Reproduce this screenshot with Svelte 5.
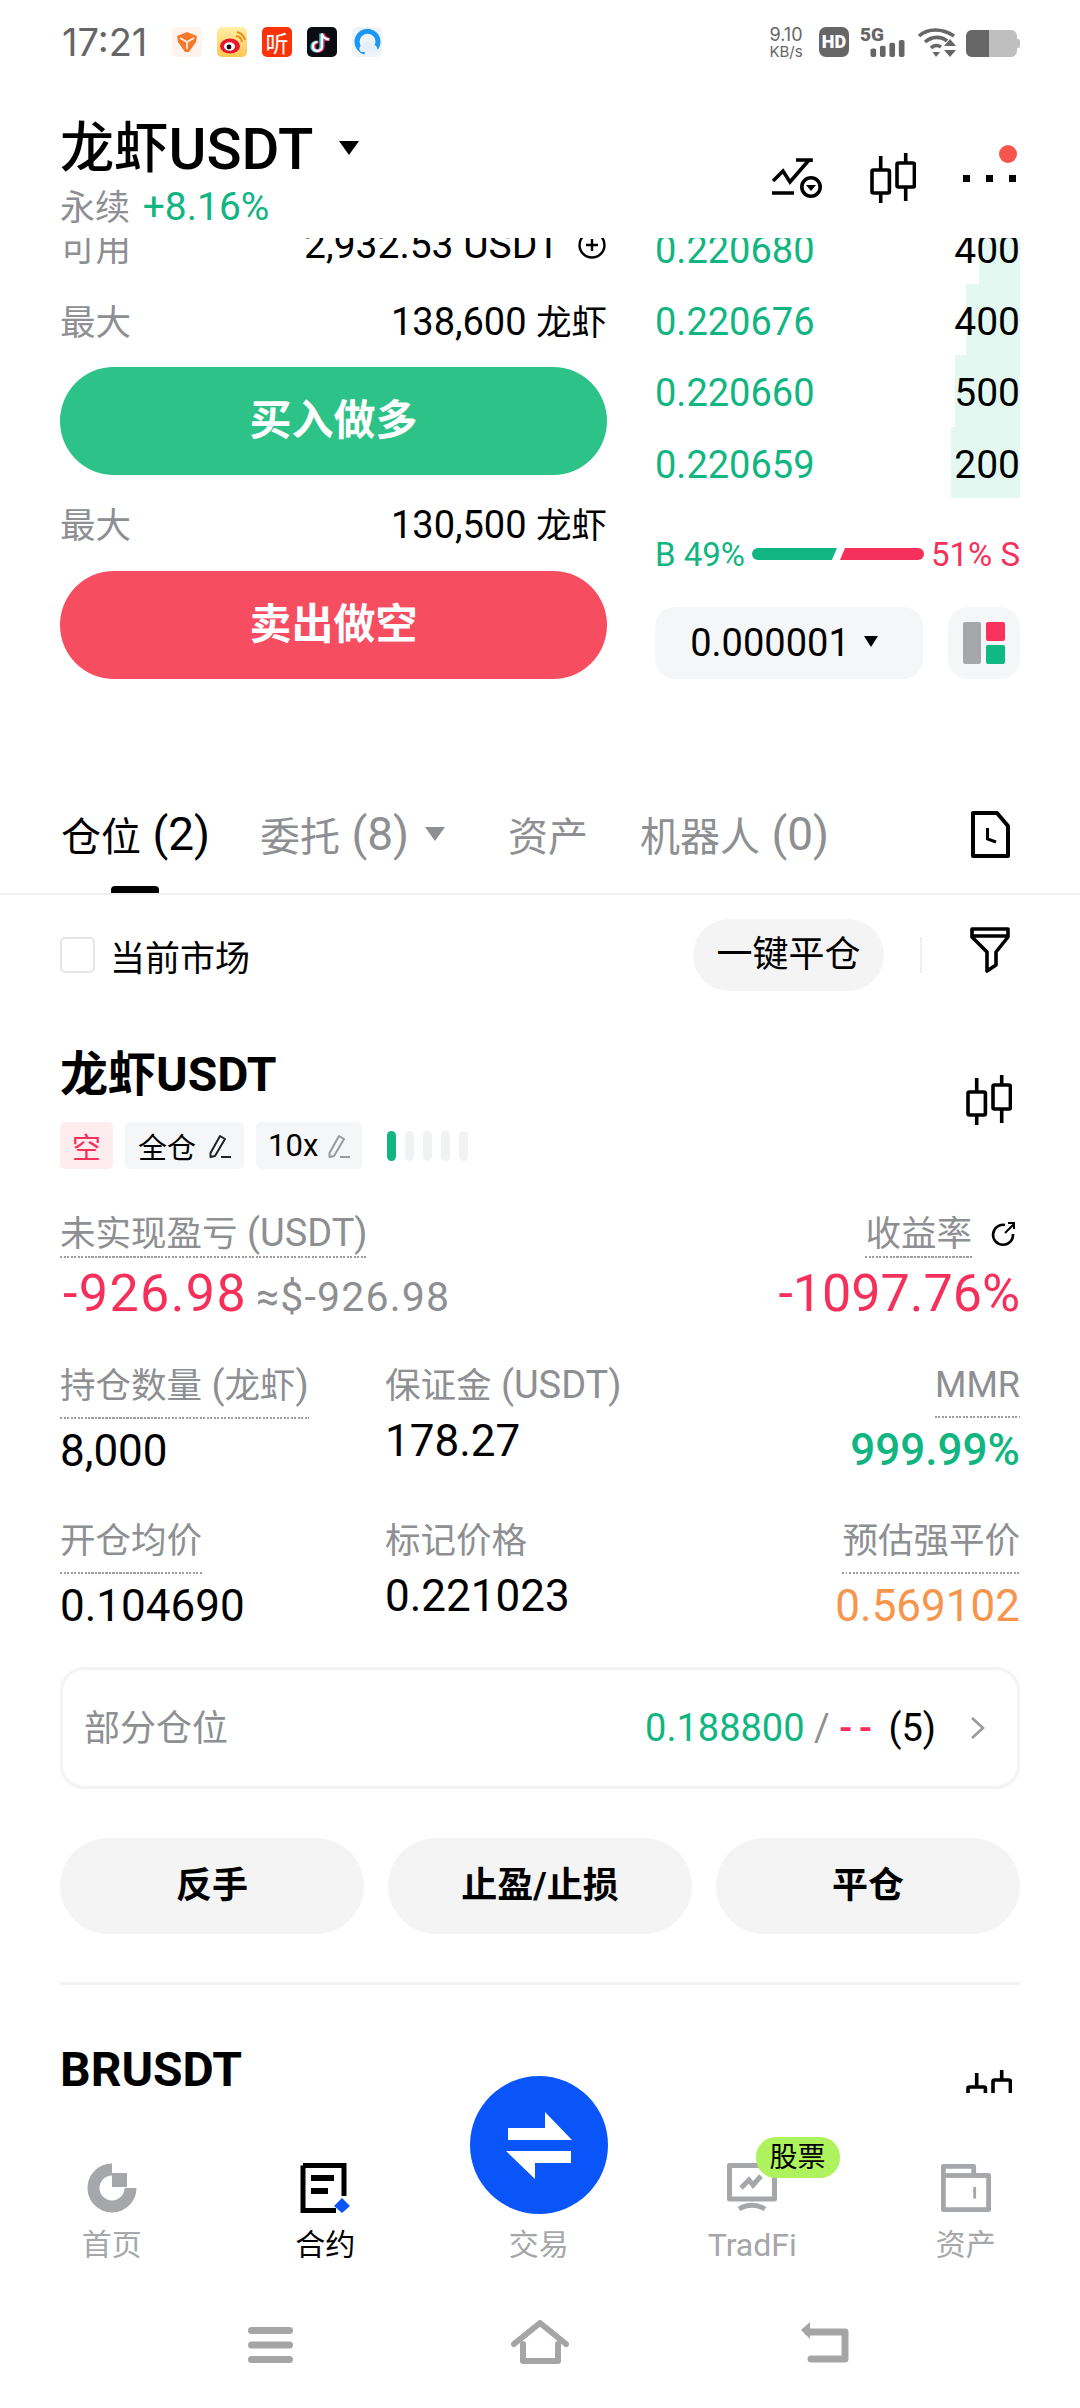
<script>
    // order book rows, bar = depth width in px
    const asks = [
        { price: "0.220680", qty: "400", bar: 41 },
        { price: "0.220676", qty: "400", bar: 54 },
        { price: "0.220660", qty: "500", bar: 65 },
        { price: "0.220659", qty: "200", bar: 69 },
    ];
    const apps = ["y", "weibo", "ting", "tiktok", "q"];
    const actions = ["反手", "止盈/止损", "平仓"];
</script>

{#snippet candle()}
    <svg class="candle" viewBox="0 0 46 50" fill="none" stroke="#000" stroke-width="3.6">
        <path d="M10.7 3V17M10.7 40V50M35.7 0V10M35.7 34V48" />
        <rect x="2" y="17" width="17.4" height="23" rx="1.5" />
        <rect x="27" y="10" width="17.4" height="24" rx="1.5" />
    </svg>
{/snippet}

{#snippet pencil(color)}
    <svg class="pencil" viewBox="0 0 22 26" fill="none" stroke={color} stroke-width="2">
        <path d="M1.500 20L11 3L16 6L6 23L1.500 24Z" stroke-linejoin="round" />
        <path d="M12 24H22" />
    </svg>
{/snippet}

<div class="screen">
    <div class="status">
        <span class="time">17:21</span>
        <div class="apps">
            {#each apps as app}
                <div class="app {app}">
                    {#if app === "y"}
                        <svg viewBox="0 0 30 30"><path d="M5 9L15 5L25 9L24 15L17 25H13L6 15Z" fill="#f47a2b" /><path d="M8 11L15 15L22 11M15 15V22" stroke="#fff3ec" stroke-width="1.6" fill="none" /></svg>
                    {:else if app === "weibo"}
                        <svg viewBox="0 0 30 30">
                            <ellipse cx="13" cy="19" rx="10" ry="7.5" fill="#e6162d" />
                            <ellipse cx="12.5" cy="19.5" rx="5.5" ry="4.2" fill="#fff" />
                            <circle cx="12" cy="20" r="2.4" fill="#111" />
                            <path d="M19 9A7 7 0 0 1 25 15M20 5A11 11 0 0 1 28 13" stroke="#f08a1d" stroke-width="2" fill="none" />
                        </svg>
                    {:else if app === "ting"}
                        <span>听</span>
                    {:else if app === "tiktok"}
                        <svg viewBox="0 0 30 30" fill="none" stroke-width="3.4">
                            <path d="M15 6V19A4.5 4.5 0 1 1 10.500 14.500M15 6C15.500 9.500 18 11.500 22 12" stroke="#25d8e0" transform="translate(-1 .6)" />
                            <path d="M15 6V19A4.500 4.500 0 1 1 10.500 14.500M15 6C15.500 9.500 18 11.500 22 12" stroke="#f42a52" transform="translate(1 .6)" />
                            <path d="M15 6V19A4.500 4.500 0 1 1 10.500 14.500M15 6C15.500 9.500 18 11.500 22 12" stroke="#fff" stroke-width="2.4" transform="translate(0 .4)" />
                        </svg>
                    {:else}
                        <svg viewBox="0 0 30 30">
                            <path d="M24 21A10.500 10.500 0 1 0 13 25" stroke="#1c97f5" stroke-width="5" fill="none" />
                            <path d="M9 25A4 4 0 0 1 10 18A6 6 0 0 1 21 18A4 4 0 0 1 24 25Z" fill="#e4eff8" />
                        </svg>
                    {/if}
                </div>
            {/each}
        </div>
        <div class="sys">
            <div class="speed"><span>9.10</span><span class="unit">KB/s</span></div>
            <div class="hd">HD</div>
            <div class="net">
                <span class="g">5G</span>
                <svg viewBox="0 0 36 18" fill="#666"><rect x="0" y="9" width="6" height="9" rx="2" /><rect x="10" y="6" width="6" height="12" rx="2" /><rect x="20" y="3" width="6" height="15" rx="2" /><rect x="30" y="0" width="6" height="18" rx="2" /></svg>
            </div>
            <svg class="wifi" viewBox="0 0 39 30" fill="none" stroke="#666" stroke-width="3.6">
                <path d="M2 9C11 1 25 1 37 9M8 15C15 9 24 9 30 14M14 21C17 18 21 18 24 20" />
                <path d="M15.500 25H23L19 30Z" fill="#666" stroke="none" />
                <path d="M27 19H39L33 12ZM27 23H39L33 30Z" fill="#666" stroke="none" />
            </svg>
            <div class="battery"><div class="level"></div></div>
        </div>
    </div>

    <div class="head">
        <div>
            <div class="pair"><span class="zh">龙虾</span>USDT<i class="caret big"></i></div>
            <div class="sub"><span class="gray zh">永续</span> <span class="green">+8.16%</span></div>
        </div>
        <div class="head-icons">
            <svg class="chart" viewBox="0 0 50 40" fill="none" stroke="#000" stroke-width="3.6">
                <path d="M1 23L11 13L18 24L37 2M24 2H39V4M0 35H22" />
                <circle cx="39" cy="29" r="9.200" />
                <path d="M34 27H44L39 33Z" fill="#000" stroke="none" />
            </svg>
            {@render candle()}
            <div class="more">
                <i></i><i></i><i></i>
                <b></b>
            </div>
        </div>
    </div>

    <div class="scroll">
        <div class="trade">
            <div class="order-form">
                <div class="form-row avail">
                    <span class="gray zh">可用</span>
                    <span class="amount">2,932.53 USDT
                        <svg class="plus" viewBox="0 0 30 30" fill="none" stroke="#000" stroke-width="2.400"><circle cx="15" cy="15" r="12.500" /><path d="M15 9V21M9 15H21" /></svg>
                    </span>
                </div>
                <div class="form-row first-max">
                    <span class="gray zh">最大</span>
                    <span>138,600 <span class="zh">龙虾</span></span>
                </div>
                <div class="trade-btn buy first-btn">买入做多</div>
                <div class="form-row second-max">
                    <span class="gray zh">最大</span>
                    <span>130,500 <span class="zh">龙虾</span></span>
                </div>
                <div class="trade-btn sell">卖出做空</div>
            </div>

            <div class="book">
                {#each asks as ask}
                    <div class="book-row">
                        <i class="depth" style="width: {ask.bar}px"></i>
                        <span class="green">{ask.price}</span>
                        <span class="qty">{ask.qty}</span>
                    </div>
                {/each}
                <div class="ratio">
                    <span class="green">B 49%</span>
                    <div class="ratio-bar">
                        <i class="b"></i>
                        <i class="s"></i>
                    </div>
                    <span class="red">51% S</span>
                </div>
                <div class="book-tools">
                    <div class="step">0.000001<i class="caret small"></i></div>
                    <div class="layout-btn">
                        <svg viewBox="0 0 42 42"><rect x="0" y="0" width="18" height="42" rx="2" fill="#a5a7aa" /><rect x="23" y="0" width="19" height="19" rx="2" fill="#f5335b" /><rect x="23" y="23" width="19" height="19" rx="2" fill="#10b981" /></svg>
                    </div>
                </div>
            </div>
        </div>

        <div class="tabs">
            <span class="tab active"><span class="zh40">仓位</span> (2)<i class="ink"></i></span>
            <span class="tab t2"><span class="zh40">委托</span> (8)<i class="caret gray-caret"></i></span>
            <span class="tab t3"><span class="zh40">资产</span></span>
            <span class="tab t4"><span class="zh40">机器人</span> (0)</span>
            <svg class="file" viewBox="0 0 39 47" fill="none" stroke="#000" stroke-width="4">
                <path d="M2 2H26L37 15V45H2Z" stroke-linejoin="round" />
                <path d="M16.500 17V28L25 31" stroke-width="3" />
            </svg>
        </div>

        <div class="toolbar">
            <i class="check"></i>
            <span class="market">当前市场</span>
            <span class="close-all">一键平仓</span>
            <i class="vline"></i>
            <svg class="filter" viewBox="0 0 40 46" fill="none" stroke="#000" stroke-width="3.600" stroke-linejoin="round">
                <path d="M2 2H38V10L26 25V38L17 44V25L2 10Z" />
                <path d="M2 9H38" />
            </svg>
        </div>

        <div class="position">
            <div class="pos-head">
                <div>
                    <div class="pos-name">龙虾USDT</div>
                    <div class="tags">
                        <span class="tag short">空</span>
                        <span class="tag">全仓{@render pencil("#222")}</span>
                        <span class="tag latin">10x{@render pencil("#999")}</span>
                        <div class="lever">
                            <i class="on"></i><i></i><i></i><i></i><i></i>
                        </div>
                    </div>
                </div>
                {@render candle()}
            </div>

            <div class="pnl">
                <div class="cell">
                    <span class="label"><span class="zh">未实现盈亏</span> (USDT)</span>
                    <div class="pnl-val"><span class="red big-num wide">-926.98</span> <span class="usd">≈$-926.98</span></div>
                </div>
                <div class="cell right">
                    <div class="roe-label">
                        <span class="label"><span class="zh">收益率</span></span>
                        <svg class="share" viewBox="0 0 26 26" fill="none" stroke="#000" stroke-width="2.600">
                            <path d="M15 4A10 10 0 1 0 23 13" />
                            <path d="M15 12L24 3M18 2H24V8" stroke-width="2" />
                        </svg>
                    </div>
                    <div class="pnl-val"><span class="red big-num">-1097.76%</span></div>
                </div>
            </div>

            <div class="grid">
                <div class="cell"><span class="label tall"><span class="zh">持仓数量</span> (<span class="zh">龙虾</span>)</span><div class="val">8,000</div></div>
                <div class="cell"><span class="label plain"><span class="zh">保证金</span> (USDT)</span><div class="val mid">178.27</div></div>
                <div class="cell right"><span class="label tall mmr">MMR</span><div class="val green strong">999.99%</div></div>

                <div class="cell"><span class="label tall"><span class="zh">开仓均价</span></span><div class="val">0.104690</div></div>
                <div class="cell"><span class="label plain"><span class="zh">标记价格</span></span><div class="val mid">0.221023</div></div>
                <div class="cell right"><span class="label tall"><span class="zh">预估强平价</span></span><div class="val orange">0.569102</div></div>
            </div>

            <div class="partial">
                <span class="gray part-name">部分仓位</span>
                <span class="partial-val">
                    <span class="green">0.188800</span>
                    <span class="gray">/</span>
                    <span class="red dashes">--</span>
                    (5)
                </span>
                <svg class="chev" viewBox="0 0 15 24" fill="none" stroke="#999" stroke-width="2.600"><path d="M2 2L13 12L2 22" /></svg>
            </div>

            <div class="actions">
                {#each actions as action}
                    <div class="action">{action}</div>
                {/each}
            </div>
        </div>

        <div class="next">
            <div class="pos-name">BRUSDT</div>
            {@render candle()}
        </div>
    </div>

    <nav class="nav">
        <div class="nav-item">
            <svg viewBox="0 0 50 50" fill="none">
                <path d="M25 6.500A18.500 18.500 0 1 0 43.500 25" stroke="#a5a7aa" stroke-width="12" />
                <rect x="25" y="10" width="15" height="14" fill="#a5a7aa" />
            </svg>
            <span>首页</span>
        </div>
        <div class="nav-item current">
            <svg viewBox="0 0 50 50">
                <path d="M3 2.500H44V33M36 47.500H3V2.500" fill="none" stroke="#000" stroke-width="5" />
                <rect x="11" y="12" width="23" height="6" fill="#000" />
                <rect x="11" y="25" width="17" height="6" fill="#000" />
                <path d="M42 35L50 43L42 50L34 43Z" fill="#0a55fa" />
            </svg>
            <span>合约</span>
        </div>
        <div class="nav-item trade-item">
            <div class="fab">
                <svg viewBox="0 0 138 138" fill="#fff">
                    <path d="M38 52H75V36L102 64H38Z" />
                    <path d="M101 75V87H65V103L36 75Z" />
                </svg>
            </div>
            <i class="nav-gap"></i>
            <span>交易</span>
        </div>
        <div class="nav-item">
            <svg viewBox="0 0 50 50" fill="none" stroke="#a5a7aa" stroke-width="5">
                <path d="M2.500 2.500H47.500V36H2.500Z" stroke-linejoin="round" />
                <path d="M12 46C20 41 30 41 38 46" />
                <path d="M14 25L22 17L26 22L34 13" stroke-width="5" />
            </svg>
            <em class="badge">股票</em>
            <span class="tradfi">TradFi</span>
        </div>
        <div class="nav-item">
            <svg viewBox="0 0 52 50" fill="none" stroke="#a5a7aa" stroke-width="5">
                <path d="M2.500 47.500V2.500H34V12H49.500V47.500Z" stroke-linejoin="round" />
                <path d="M2.500 12H34" />
                <path d="M35 24V36" stroke-width="3" />
            </svg>
            <span>资产</span>
        </div>
    </nav>

    <div class="home-bar">
        <svg class="h-menu" viewBox="0 0 45 36" fill="none" stroke="#a5a5a5" stroke-width="7" stroke-linecap="round"><path d="M3.500 3.500H41.500M3.500 18H41.500M3.500 32.500H41.500" /></svg>
        <svg class="h-home" viewBox="0 0 58 44" fill="none" stroke="#a5a5a5" stroke-width="6" stroke-linecap="round" stroke-linejoin="round"><path d="M3 24L29 3L55 24" /><path d="M12 24V41H47V24" /></svg>
        <svg class="h-back" viewBox="0 0 48 42" fill="none" stroke="#a5a5a5" stroke-width="7" stroke-linejoin="round"><path d="M7 11H44V38H10" stroke-linecap="round" /><path d="M9 1V18L0 9Z" fill="#a5a5a5" stroke="none" /></svg>
    </div>
</div>

<style>
    :global(body) {
        margin: 0;
        background: #fff;
    }

    .screen {
        width: 1080px;
        height: 2408px;
        display: flex;
        flex-direction: column;
        overflow: hidden;
        position: relative;
        background: #fff;
        color: #000;
        font-family: Roboto, "Noto Sans CJK SC", sans-serif;
        font-size: 36px;
    }

    i, em {
        display: block;
        font-style: normal;
    }

    /* latin runs sit about 7% bigger than the han next to them */
    .zh { font-size: 0.935em; }
    .zh40 { font-size: 40px; }

    .green { color: #10b582; }
    .red { color: #f5315b; }
    .orange { color: #f6964c; }
    .gray { color: #8d8f92; }

    /* status bar */
    .status {
        height: 84px;
        flex: none;
        display: flex;
        align-items: flex-start;
        padding: 27px 63px 0 62px;
        box-sizing: border-box;
    }

    .time {
        font-family: Inter, sans-serif;
        font-size: 38px;
        line-height: 30px;
        color: #666;
        width: 110px;
    }

    .apps {
        display: flex;
        gap: 15px;
    }

    .app {
        width: 30px;
        height: 30px;
        border-radius: 5px;
        overflow: hidden;
        display: flex;
        align-items: center;
        justify-content: center;
    }

    .app svg {
        width: 30px;
        height: 30px;
    }

    .app.y { background: #fff4ed; }
    .app.weibo { background: linear-gradient(#fff0a8, #fdc64f); }
    .app.ting {
        background: #fa3308;
        color: #fff;
        font-size: 23px;
    }
    .app.tiktok { background: #0b0b14; }
    .app.q { background: #eff4fa; }

    .sys {
        margin-left: auto;
        display: flex;
        align-items: flex-start;
        color: #666;
    }

    .speed {
        display: flex;
        flex-direction: column;
        align-items: center;
        font-family: Inter, sans-serif;
        font-size: 18px;
        line-height: 15px;
        width: 36px;
        margin-right: 15px;
    }

    .unit {
        font-size: 15px;
        margin-top: 2px;
    }

    .hd {
        width: 30px;
        height: 30px;
        background: #666;
        color: #fff;
        border-radius: 7px;
        font-size: 18px;
        font-weight: 900;
        line-height: 30px;
        text-align: center;
        margin-right: 11px;
    }

    .net {
        width: 45px;
        height: 30px;
        position: relative;
        margin-right: 12px;
    }

    .g {
        position: absolute;
        left: 0;
        top: -2px;
        font-size: 19px;
        line-height: 20px;
        font-weight: 900;
    }

    .net svg {
        position: absolute;
        right: 0;
        bottom: 0;
        width: 35px;
        height: 17px;
    }

    .wifi {
        width: 39px;
        height: 30px;
        margin-right: 10px;
    }

    .battery {
        width: 51px;
        height: 27px;
        margin-top: 3px;
        background: #bfbfbf;
        border-radius: 6px;
        position: relative;
    }

    .battery::after {
        content: "";
        position: absolute;
        right: -3px;
        top: 9px;
        width: 3px;
        height: 9px;
        background: #bfbfbf;
        border-radius: 0 2px 2px 0;
    }

    .level {
        width: 23px;
        height: 27px;
        background: #666;
        border-radius: 6px 0 0 6px;
    }

    /* instrument header */
    .head {
        height: 154px;
        flex: none;
        display: flex;
        justify-content: space-between;
        padding: 0 60px;
        box-sizing: border-box;
        background: #fff;
    }

    .pair {
        display: flex;
        align-items: center;
        font-size: 58px;
        font-weight: 500;
        line-height: 70px;
        margin-top: 30px;
        white-space: pre;
    }

    .caret {
        width: 0;
        height: 0;
        border-style: solid;
        border-color: #000 transparent transparent;
    }

    .caret.big {
        border-width: 14px 10px 0;
        margin: -2px 0 0 26px;
    }

    .sub {
        font-size: 39px;
        line-height: 44px;
        margin-top: 1px;
        white-space: pre;
    }

    .sub .zh {
        font-size: 35px;
        margin-right: 3px;
    }

    .head-icons {
        display: flex;
        align-items: flex-start;
    }

    .chart {
        width: 50px;
        height: 40px;
        margin: 74px 48px 0 0;
    }

    .head-icons .candle {
        margin: 69px 47px 0 0;
    }

    .candle {
        width: 46px;
        height: 50px;
        flex: none;
    }

    .more {
        display: flex;
        gap: 16px;
        width: 53px;
        margin: 91px 4px 0 0;
        position: relative;
    }

    .more i {
        width: 7px;
        height: 7px;
        background: #000;
    }

    .more b {
        position: absolute;
        right: -1px;
        top: -30px;
        width: 18px;
        height: 18px;
        border-radius: 50%;
        background: #f6564e;
    }

    /* scrolled content */
    .scroll {
        flex: none;
        height: 1855px;
        overflow: hidden;
    }

    .trade {
        display: flex;
        justify-content: space-between;
        padding: 0 60px;
        margin-top: -26px;
    }

    .order-form {
        width: 547px;
    }

    .form-row {
        display: flex;
        justify-content: space-between;
        align-items: center;
        height: 50px;
        font-size: 38px;
    }

    .avail {
        margin-top: 8px;
    }

    .amount {
        display: flex;
        align-items: center;
        font-size: 39px;
    }

    .plus {
        width: 30px;
        height: 30px;
        margin-left: 17px;
    }

    .first-max { margin-top: 24px; }
    .second-max { margin-top: 22px; }

    .trade-btn {
        height: 108px;
        border-radius: 54px;
        color: #fff;
        font-size: 42px;
        font-weight: 700;
        line-height: 108px;
        text-align: center;
        margin-top: 24px;
    }

    .first-btn { margin-top: 23px; }

    .buy { background: #2dc287; }
    .sell { background: #f74d61; }

    .book {
        width: 365px;
    }

    .book-row {
        position: relative;
        height: 71.5px;
        padding-top: 5px;
        box-sizing: border-box;
        display: flex;
        justify-content: space-between;
        align-items: center;
        font-size: 38px;
    }

    .book-row span {
        position: relative;
    }

    .book-row .qty {
        font-size: 39px;
    }

    .depth {
        position: absolute;
        right: 0;
        top: 0;
        bottom: 0;
        background: #e3f8f0;
    }

    .ratio {
        display: flex;
        align-items: center;
        justify-content: space-between;
        font-size: 33px;
        height: 36px;
        margin-top: 38px;
        white-space: nowrap;
    }

    .ratio-bar {
        display: flex;
        flex: none;
        width: 172px;
        height: 12px;
    }

    .ratio-bar i {
        height: 12px;
    }

    .ratio-bar .b {
        width: 85px;
        background: #10b582;
        border-radius: 6px 0 0 6px;
        clip-path: polygon(0 0, 100% 0, 94% 100%, 0 100%);
    }

    .ratio-bar .s {
        width: 84px;
        margin-left: 3px;
        background: #f5315b;
        border-radius: 0 6px 6px 0;
        clip-path: polygon(6% 0, 100% 0, 100% 100%, 0 100%);
    }

    .book-tools {
        display: flex;
        justify-content: space-between;
        margin-top: 35px;
    }

    .step {
        width: 268px;
        height: 72px;
        padding-right: 10px;
        box-sizing: border-box;
        background: #f5f6f7;
        border-radius: 20px;
        display: flex;
        align-items: center;
        justify-content: center;
        font-size: 38px;
    }

    .caret.small {
        border-width: 11px 7px 0;
        margin: -4px 0 0 14px;
    }

    .layout-btn {
        width: 72px;
        height: 72px;
        background: #f5f6f7;
        border-radius: 20px;
        display: flex;
        align-items: center;
        justify-content: center;
    }

    .layout-btn svg {
        width: 42px;
        height: 42px;
    }

    /* tabs */
    .tabs {
        margin-top: 96px;
        height: 120px;
        box-sizing: border-box;
        border-bottom: 2px solid #f0f1f2;
        display: flex;
        align-items: center;
        padding: 0 70px 0 61px;
        color: #8d8f92;
        font-size: 46px;
    }

    .tab {
        display: flex;
        align-items: center;
        white-space: pre;
    }

    .tab.active {
        color: #000;
        position: relative;
        align-self: stretch;
    }

    .ink {
        position: absolute;
        left: 50px;
        bottom: 0;
        width: 48px;
        height: 7px;
        background: #000;
        border-radius: 4px 4px 0 0;
    }

    .t2 { margin-left: 50px; }
    .t3 { margin-left: 63px; }
    .t4 { margin-left: 52px; }

    .gray-caret {
        border-color: #8d8f92 transparent transparent;
        border-width: 14px 10px 0;
        margin-left: 16px;
    }

    .file {
        width: 39px;
        height: 47px;
        margin-left: auto;
    }

    /* filter row */
    .toolbar {
        height: 120px;
        display: flex;
        align-items: center;
        padding: 0 70px 0 60px;
        font-size: 35px;
    }

    .check {
        width: 31px;
        height: 32px;
        border: 2px solid #e3e5e7;
        border-radius: 5px;
    }

    .market {
        margin-left: 15px;
    }

    .close-all {
        margin-left: auto;
        width: 191px;
        height: 72px;
        line-height: 72px;
        text-align: center;
        background: #f4f4f5;
        border-radius: 36px;
        font-size: 36px;
    }

    .vline {
        width: 2px;
        height: 36px;
        margin: 0 48px 0 36px;
        background: #eeeff0;
    }

    .filter {
        width: 40px;
        height: 46px;
        margin-top: -10px;
    }

    /* position card */
    .position {
        padding: 30px 60px 0;
    }

    .pos-head {
        display: flex;
        justify-content: space-between;
    }

    .pos-head .candle {
        margin: 30px 8px 0 0;
    }

    .pos-name {
        font-size: 48px;
        font-weight: 700;
        line-height: 60px;
    }

    .tags {
        display: flex;
        align-items: center;
        margin-top: 17px;
        gap: 12px;
    }

    .tag {
        display: flex;
        align-items: center;
        height: 47px;
        padding: 0 13px;
        background: #f5f6f7;
        border-radius: 5px;
        font-size: 29px;
    }

    .tag.latin {
        font-size: 31px;
        padding: 0 12px;
    }

    .tag.latin .pencil {
        margin-left: 10px;
    }

    .tag.short {
        background: #ffecef;
        color: #f5315b;
        padding: 0 12px;
    }

    .pencil {
        width: 22px;
        height: 26px;
        margin-left: 13px;
    }

    .lever {
        display: flex;
        gap: 9px;
        margin-left: 13px;
    }

    .lever i {
        width: 9px;
        height: 30px;
        border-radius: 5px;
        background: #f1f2f3;
    }

    .lever .on {
        background: #10b582;
    }

    .cell {
        display: flex;
        flex-direction: column;
        align-items: flex-start;
    }

    .cell.right {
        align-items: flex-end;
    }

    .pnl {
        display: flex;
        justify-content: space-between;
        margin-top: 42px;
    }

    /* fine dotted underline */
    .label {
        display: block;
        font-size: 38px;
        line-height: 44px;
        color: #8d8f92;
        padding-bottom: 2px;
        background: repeating-linear-gradient(90deg, #9c9ea0 0 2px, transparent 2px 3.5px) left bottom / 100% 2px no-repeat;
    }

    .label.tall {
        padding-bottom: 11px;
    }

    .label.plain {
        padding-bottom: 0;
        background: none;
    }

    .mmr {
        font-size: 36px;
    }

    .pnl-val {
        margin-top: 6px;
        line-height: 60px;
        white-space: pre;
    }

    .big-num {
        font-size: 52px;
    }

    .wide {
        letter-spacing: 1.4px;
        margin-left: 3px;
    }

    .usd {
        font-size: 41px;
        color: #8d8f92;
        letter-spacing: 1.2px;
    }

    .roe-label {
        display: flex;
        align-items: flex-start;
    }

    .share {
        width: 26px;
        height: 26px;
        margin: 10px 4px 0 18px;
    }

    .grid {
        display: grid;
        grid-template-columns: 325px 1fr auto;
        row-gap: 42.5px;
        margin-top: 33.5px;
    }

    .val {
        font-size: 44px;
        line-height: 50px;
        margin-top: 7px;
    }

    .val.mid {
        margin-top: 8px;
    }

    .strong {
        font-weight: 500;
    }

    .partial {
        margin-top: 35.5px;
        height: 122px;
        box-sizing: border-box;
        border: 3px solid #f2f3f4;
        border-radius: 24px;
        display: flex;
        align-items: center;
        padding: 0 32px 0 21px;
    }

    .part-name {
        font-size: 36px;
        margin-top: -6px;
    }

    .partial-val {
        margin-left: auto;
        font-size: 38px;
        white-space: pre;
    }

    .dashes {
        letter-spacing: 7px;
        font-weight: 500;
    }

    .chev {
        width: 15px;
        height: 24px;
        margin-left: 34px;
    }

    .actions {
        display: flex;
        gap: 24px;
        margin-top: 49px;
    }

    .action {
        flex: 1;
        height: 96px;
        line-height: 96px;
        text-align: center;
        background: #f4f4f4;
        border-radius: 48px;
        font-size: 36px;
        font-weight: 700;
    }

    .next {
        margin: 48px 60px 0;
        padding-top: 55px;
        border-top: 3px solid #f2f3f4;
        display: flex;
        justify-content: space-between;
    }

    .next .candle {
        margin: 30px 8px 0 0;
    }

    /* bottom nav */
    .nav {
        flex: none;
        height: 177px;
        display: grid;
        grid-template-columns: repeat(5, 213.5px);
        padding: 0 0 0 5px;
        position: relative;
        background: #fff;
    }

    .nav-item {
        display: flex;
        flex-direction: column;
        align-items: center;
        padding-top: 70px;
        position: relative;
        font-size: 30px;
        line-height: 40px;
        color: #a5a7aa;
    }

    .nav-item svg {
        width: 50px;
        height: 50px;
    }

    .nav-item span {
        margin-top: 12px;
    }

    .nav-item .tradfi {
        font-size: 32px;
    }

    .nav-item.current {
        color: #000;
    }

    .nav-gap {
        height: 50px;
    }

    .fab {
        position: absolute;
        left: 38px;
        top: -17px;
        width: 138px;
        height: 138px;
        border-radius: 50%;
        background: #0a55fa;
    }

    .nav-item .fab svg {
        width: 138px;
        height: 138px;
        display: block;
    }

    .badge {
        position: absolute;
        left: 110px;
        top: 44px;
        width: 84px;
        height: 41px;
        border-radius: 20px;
        background: #aef25e;
        color: #000;
        font-size: 28px;
        line-height: 41px;
        text-align: center;
    }

    /* android nav bar */
    .home-bar {
        flex: 1;
        display: flex;
        align-items: flex-start;
        padding: 50px 0 0 248px;
        box-sizing: border-box;
    }

    .h-menu { width: 45px; height: 36px; margin-top: 7px; }
    .h-home { width: 58px; height: 44px; margin-left: 218px; }
    .h-back { width: 48px; height: 42px; margin-left: 232px; margin-top: 1px; }
</style>
